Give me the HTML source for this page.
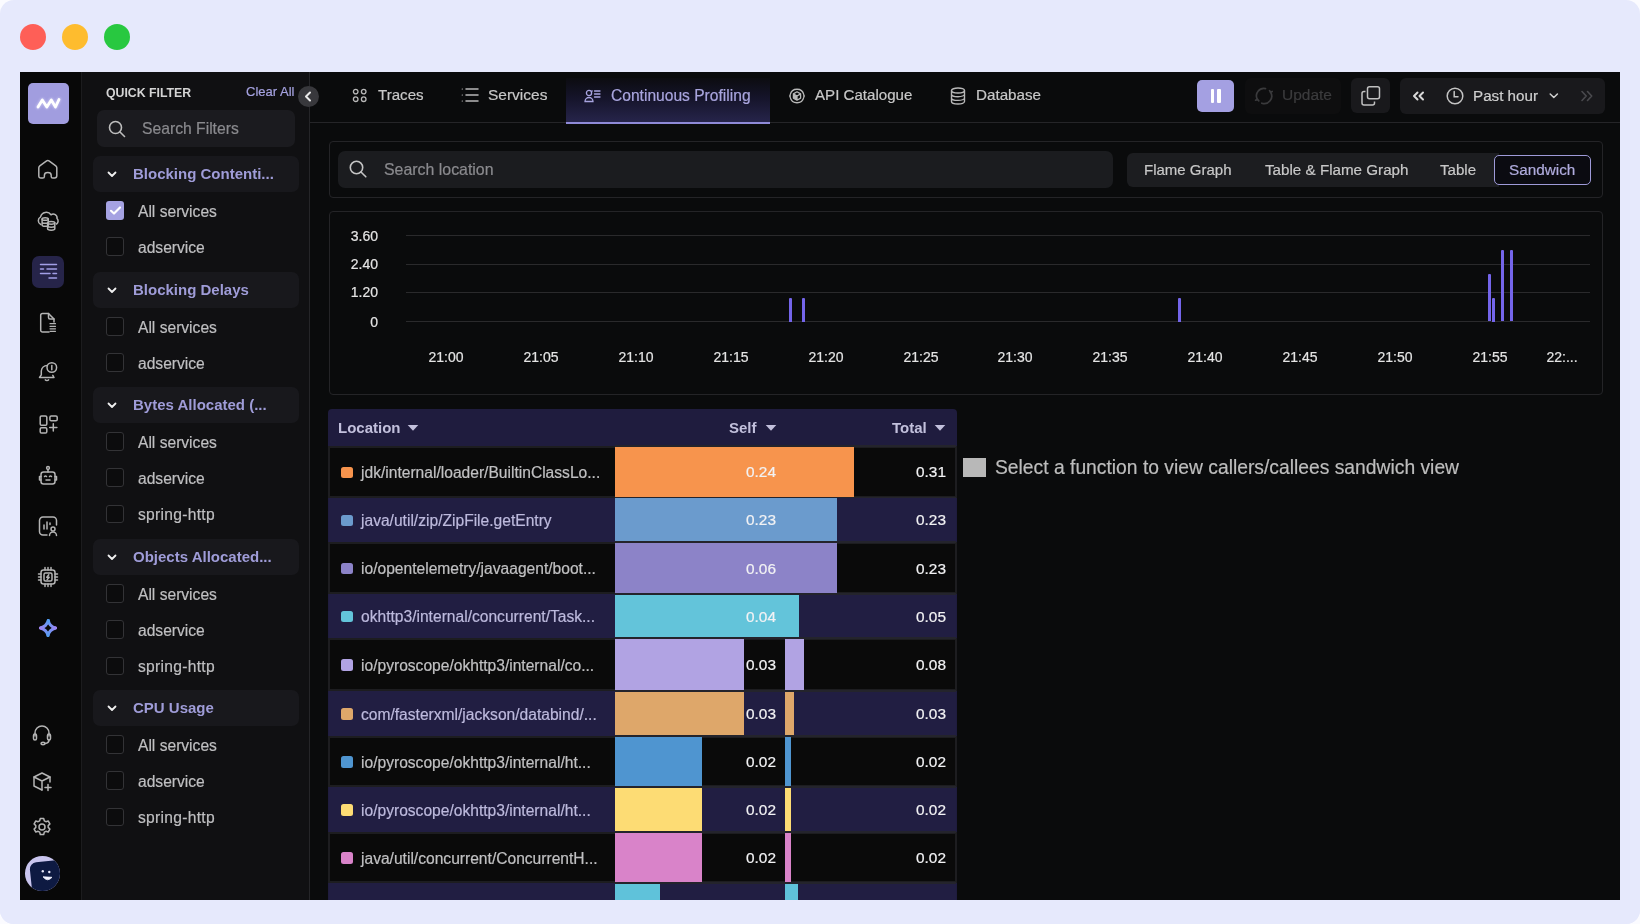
<!DOCTYPE html>
<html><head><meta charset="utf-8">
<style>
*{margin:0;padding:0;box-sizing:border-box}
html,body{width:1640px;height:924px;overflow:hidden}
body{background:#fbfbff;font-family:"Liberation Sans",sans-serif;position:relative}
.a{position:absolute}
.t{position:absolute;white-space:nowrap;line-height:20px;height:20px;will-change:transform;-webkit-text-stroke:0.2px currentColor}
svg{position:absolute;overflow:visible}
.ic{fill:none;stroke:#b4b4b4;stroke-width:1.5;stroke-linecap:round;stroke-linejoin:round}
</style></head><body>
<div class="a" style="left:0;top:0;width:1640px;height:924px;border-radius:14px;background:#e6e9fc"></div>
<!-- traffic lights -->
<div class="a" style="left:20px;top:24px;width:26px;height:26px;border-radius:50%;background:#fe5f57"></div>
<div class="a" style="left:62px;top:24px;width:26px;height:26px;border-radius:50%;background:#febc2e"></div>
<div class="a" style="left:104px;top:24px;width:26px;height:26px;border-radius:50%;background:#28c840"></div>

<!-- app window -->
<div class="a" style="left:20px;top:72px;width:1600px;height:828px;background:#0a0b0c"></div>
<!-- left sidebar -->
<div class="a" style="left:20px;top:72px;width:62px;height:828px;background:#080808;border-right:1px solid #1c1c1e"></div>
<!-- filter panel -->
<div class="a" style="left:82px;top:72px;width:228px;height:828px;background:#101012;border-right:1px solid #252528"></div>

<!-- SIDEBAR ICONS -->
<div class="a" style="left:28px;top:83px;width:41px;height:41px;border-radius:5px;background:#a19ddf"></div>
<svg width="41" height="41" style="left:28px;top:83px"><polyline points="10,24 14.3,17 18.8,24 23.3,17 27.5,24 31,16.5" fill="none" stroke="#e8e6ff" stroke-width="4" stroke-linejoin="round" stroke-linecap="round" opacity="0.5" style="filter:blur(1px)"/><polyline points="10,24 14.3,17 18.8,24 23.3,17 27.5,24 31,16.5" fill="none" stroke="#fff" stroke-width="2.8" stroke-linejoin="round" stroke-linecap="round"/></svg>

<!-- home -->
<svg width="24" height="24" style="left:36px;top:157px" class="ic"><path d="M2.8 10.8 Q2.8 9.6 3.8 8.8 L10.6 3.9 Q11.8 3.1 13 3.9 L19.8 8.8 Q20.8 9.6 20.8 10.8 V18.8 Q20.8 21 18.6 21 H16.8 Q15.2 21 15.2 19.4 V18.3 Q15.2 15.6 11.8 15.6 Q8.4 15.6 8.4 18.3 V19.4 Q8.4 21 6.8 21 H5 Q2.8 21 2.8 18.8 Z"/></svg>
<!-- cloud db -->
<svg width="24" height="24" style="left:36px;top:208px" class="ic"><path d="M4.8 16.5 A4.3 4.3 0 0 1 4.6 8.8 A5.8 5.8 0 0 1 15 6.8 A3.8 3.8 0 0 1 21 10.5 A3.5 3.5 0 0 1 20.5 16"/><ellipse cx="9.2" cy="11" rx="3.1" ry="1.3"/><path d="M6.1 11 v6 a3.1 1.3 0 0 0 6.2 0 V11 M6.1 14 a3.1 1.3 0 0 0 6.2 0"/><ellipse cx="15.2" cy="14.8" rx="3.6" ry="1.4"/><path d="M11.6 14.8 v6 a3.6 1.4 0 0 0 7.2 0 V14.8 M11.6 17.8 a3.6 1.4 0 0 0 7.2 0"/></svg>
<!-- active -->
<div class="a" style="left:32px;top:256px;width:32px;height:32px;border-radius:7px;background:#262449"></div>
<svg width="32" height="32" style="left:32px;top:256px" fill="none" stroke="#a29ee6" stroke-width="1.5" stroke-linecap="round"><path d="M8.5 8.5 H24.5 M8.5 13 H11.5 M15 13 H24.5 M8.5 17.5 H18 M21 17.5 H24.5 M17 22 H24.5"/></svg>
<!-- doc -->
<svg width="24" height="24" style="left:36px;top:311.3px" class="ic"><path d="M13 21 H6.5 A1.8 1.8 0 0 1 4.7 19.2 V4.3 A1.8 1.8 0 0 1 6.5 2.5 H12.5 L18 8 V11"/><path d="M12.5 2.5 V6.5 A1.5 1.5 0 0 0 14 8 H18"/><path d="M14 12.7 H19.5 M14 15.3 H19.5 M14 17.8 H19.5 M14 20.3 H19.5" stroke-width="1.2"/></svg>
<!-- bell -->
<svg width="24" height="24" style="left:35px;top:359.5px" class="ic"><path d="M12.2 5.5 A6 6 0 0 0 6.3 11 V14.8 L4.5 17.5 H19 L17.8 15.3"/><path d="M10.3 19.8 a1.9 1.6 0 0 0 3.3 0"/><circle cx="16.8" cy="7.5" r="4.8"/><path d="M16.8 5.5 V9.8"/></svg>
<!-- grid plus -->
<svg width="24" height="24" style="left:36px;top:412px" class="ic"><rect x="4.2" y="4" width="6.6" height="9.3" rx="1.3"/><rect x="4.2" y="15.8" width="6.6" height="5.3" rx="1.3"/><rect x="13.9" y="4" width="7.3" height="4.8" rx="1.3"/><path d="M17.3 11.8 V19 M13.7 15.4 H20.9"/></svg>
<!-- robot -->
<svg width="24" height="24" style="left:36px;top:464px" class="ic"><rect x="5" y="8" width="14" height="12" rx="2.5"/><path d="M12 8 V5.5"/><circle cx="12" cy="4" r="1.4"/><path d="M5 12.5 H3.5 V16 H5 M19 12.5 H20.5 V16 H19"/><path d="M8.5 12.5 q1 -1 2 0 M13.5 12.5 q1 -1 2 0 M10 16 H14"/></svg>
<!-- chart person -->
<svg width="24" height="24" style="left:36px;top:514px" class="ic"><path d="M11 21 H7 A3.5 3.5 0 0 1 3.5 17.5 V6.5 A3.5 3.5 0 0 1 7 3 H17 A3.5 3.5 0 0 1 20.5 6.5 V11"/><path d="M8 11 V15 M11 8 V15 M14 9 V10.5"/><circle cx="17" cy="15" r="2"/><path d="M13.5 21.5 a3.5 3.5 0 0 1 7 0"/></svg>
<!-- chip -->
<svg width="24" height="24" style="left:36px;top:565px" class="ic"><rect x="5" y="5" width="14" height="14" rx="2.5"/><rect x="8" y="8" width="8" height="8" rx="1.5"/><path d="M12.8 9.8 L10.8 12.3 H13.2 L11.2 14.5"/><path d="M9 5 V2.5 M12 5 V2.5 M15 5 V2.5 M9 19 V21.5 M12 19 V21.5 M15 19 V21.5 M5 9 H2.5 M5 12 H2.5 M5 15 H2.5 M19 9 H21.5 M19 12 H21.5 M19 15 H21.5"/></svg>
<!-- sparkle -->
<svg width="18" height="18" style="left:39.3px;top:619.3px" fill="none" stroke-width="3" stroke-linecap="round">
<defs>
<linearGradient id="g1" gradientUnits="userSpaceOnUse" x1="9" y1="0" x2="18" y2="9"><stop offset="0" stop-color="#4f9ef2"/><stop offset="1" stop-color="#a283f2"/></linearGradient>
<linearGradient id="g2" gradientUnits="userSpaceOnUse" x1="18" y1="9" x2="9" y2="18"><stop offset="0" stop-color="#a283f2"/><stop offset="1" stop-color="#4f9ef2"/></linearGradient>
<linearGradient id="g3" gradientUnits="userSpaceOnUse" x1="9" y1="18" x2="0" y2="9"><stop offset="0" stop-color="#4f9ef2"/><stop offset="1" stop-color="#a283f2"/></linearGradient>
<linearGradient id="g4" gradientUnits="userSpaceOnUse" x1="0" y1="9" x2="9" y2="0"><stop offset="0" stop-color="#a283f2"/><stop offset="1" stop-color="#4f9ef2"/></linearGradient>
</defs>
<path d="M9.3 1.5 Q10.5 7.5 16.5 9" stroke="url(#g1)"/>
<path d="M16.5 9 Q10.5 10.5 9 16.5" stroke="url(#g2)"/>
<path d="M9 16.5 Q7.5 10.5 1.5 9" stroke="url(#g3)"/>
<path d="M1.5 9 Q7.5 7.5 9.3 1.5" stroke="url(#g4)"/>
</svg>
<!-- bottom icons -->
<svg width="24" height="24" style="left:29.5px;top:722px" class="ic"><path d="M5 14 V11 A7 7 0 0 1 19 11 V14"/><rect x="3.5" y="12" width="3" height="6" rx="1.5"/><rect x="17.5" y="12" width="3" height="6" rx="1.5"/><path d="M19 18 Q19 21 15 21.5"/><ellipse cx="13" cy="21.5" rx="2" ry="1.2"/></svg>
<svg width="24" height="24" style="left:29.5px;top:769px" class="ic"><path d="M12 21 L4 17 V8 L12 4 L20 8 V13"/><path d="M4 8 L12 12 L20 8 M12 12 V21"/><path d="M18 15.5 V21.5 M15 18.5 H21"/></svg>
<svg width="24" height="24" style="left:29.5px;top:815px" class="ic"><path d="M10.3 3.5 h3.4 l.6 2.3 1.6.9 2.3-.7 1.7 2.9-1.7 1.7v1.8l1.7 1.7-1.7 2.9-2.3-.7-1.6.9-.6 2.3h-3.4l-.6-2.3-1.6-.9-2.3.7-1.7-2.9 1.7-1.7v-1.8l-1.7-1.7 1.7-2.9 2.3.7 1.6-.9z"/><circle cx="12" cy="12" r="3"/></svg>
<!-- avatar -->
<div class="a" style="left:25px;top:856px;width:34.5px;height:34.5px;border-radius:50%;background:#c9c5ee;overflow:hidden"><div class="a" style="left:6px;top:5px;width:36px;height:36px;border-radius:7px;background:#0e1a42;transform:rotate(-6deg)"></div></div>
<svg width="34" height="34" style="left:25px;top:856px"><ellipse cx="17.8" cy="15.3" rx="1.2" ry="1.3" fill="#e8e8f8"/><ellipse cx="24.3" cy="16" rx="1.2" ry="1.3" fill="#e8e8f8"/><path d="M18 20.8 Q22.5 26.5 27 21.3 Z" fill="#f4f4ff" stroke="#f4f4ff" stroke-width="0.8" stroke-linejoin="round"/></svg>


<!-- FILTER PANEL -->
<div class="t" style="left:106px;top:83px;font-size:12.3px;font-weight:bold;-webkit-text-stroke:0;color:#d4d4d4">QUICK FILTER</div>
<div class="t" style="left:246px;top:82.3px;font-size:13px;color:#a5a2e0">Clear All</div>
<div class="a" style="left:298px;top:86px;width:21px;height:21px;border-radius:50%;background:#38383c"></div>
<svg width="21" height="21" style="left:298px;top:86px" fill="none" stroke="#e8e8e8" stroke-width="2" stroke-linecap="round" stroke-linejoin="round"><path d="M12 6.5 L8 10.5 L12 14.5"/></svg>
<div class="a" style="left:97px;top:110px;width:198px;height:37px;border-radius:7px;background:#1b1b1f"></div>
<svg width="18" height="18" style="left:108px;top:120px" fill="none" stroke="#bdbdbd" stroke-width="1.6" stroke-linecap="round"><circle cx="7.5" cy="7.5" r="6"/><path d="M12 12 L16.5 16.5"/></svg>
<div class="t" style="left:142px;top:119px;font-size:15.7px;color:#8a8a8e">Search Filters</div>

<div class="a" style="left:93px;top:156px;width:206px;height:36px;border-radius:7px;background:#18181c"></div>
<svg width="12" height="12" style="left:106px;top:168px" fill="none" stroke="#f0f0f0" stroke-width="1.8" stroke-linecap="round" stroke-linejoin="round"><path d="M2.5 4.5 L6 8 L9.5 4.5"/></svg>
<div class="t" style="left:133px;top:164px;font-size:15px;font-weight:bold;-webkit-text-stroke:0;color:#9f9cd8">Blocking Contenti...</div>
<div class="a" style="left:106px;top:201.0px;width:18.3px;height:18.5px;border-radius:3px;background:#a5a2e2"></div>
<svg width="18.3" height="18.5" style="left:105.8px;top:200.8px" fill="none" stroke="#fff" stroke-width="2.2" stroke-linecap="round" stroke-linejoin="round"><path d="M5 9.8 L8 12.5 L14 6.5"/></svg>
<div class="t" style="left:138px;top:201.5px;font-size:15.6px;color:#bfbfc1">All services</div>
<div class="a" style="left:106px;top:237.4px;width:18.3px;height:18.5px;border-radius:3px;background:#0c0c0d;border:1px solid #333336"></div>
<div class="t" style="left:138px;top:237.9px;font-size:15.6px;color:#bfbfc1">adservice</div>
<div class="a" style="left:93px;top:272px;width:206px;height:36px;border-radius:7px;background:#18181c"></div>
<svg width="12" height="12" style="left:106px;top:284px" fill="none" stroke="#f0f0f0" stroke-width="1.8" stroke-linecap="round" stroke-linejoin="round"><path d="M2.5 4.5 L6 8 L9.5 4.5"/></svg>
<div class="t" style="left:133px;top:280px;font-size:15px;font-weight:bold;-webkit-text-stroke:0;color:#9f9cd8">Blocking Delays</div>
<div class="a" style="left:106px;top:317.0px;width:18.3px;height:18.5px;border-radius:3px;background:#0c0c0d;border:1px solid #333336"></div>
<div class="t" style="left:138px;top:317.5px;font-size:15.6px;color:#bfbfc1">All services</div>
<div class="a" style="left:106px;top:353.4px;width:18.3px;height:18.5px;border-radius:3px;background:#0c0c0d;border:1px solid #333336"></div>
<div class="t" style="left:138px;top:353.9px;font-size:15.6px;color:#bfbfc1">adservice</div>
<div class="a" style="left:93px;top:387px;width:206px;height:36px;border-radius:7px;background:#18181c"></div>
<svg width="12" height="12" style="left:106px;top:399px" fill="none" stroke="#f0f0f0" stroke-width="1.8" stroke-linecap="round" stroke-linejoin="round"><path d="M2.5 4.5 L6 8 L9.5 4.5"/></svg>
<div class="t" style="left:133px;top:395px;font-size:15px;font-weight:bold;-webkit-text-stroke:0;color:#9f9cd8">Bytes Allocated (...</div>
<div class="a" style="left:106px;top:432.0px;width:18.3px;height:18.5px;border-radius:3px;background:#0c0c0d;border:1px solid #333336"></div>
<div class="t" style="left:138px;top:432.5px;font-size:15.6px;color:#bfbfc1">All services</div>
<div class="a" style="left:106px;top:468.4px;width:18.3px;height:18.5px;border-radius:3px;background:#0c0c0d;border:1px solid #333336"></div>
<div class="t" style="left:138px;top:468.9px;font-size:15.6px;color:#bfbfc1">adservice</div>
<div class="a" style="left:106px;top:504.7px;width:18.3px;height:18.5px;border-radius:3px;background:#0c0c0d;border:1px solid #333336"></div>
<div class="t" style="left:138px;top:505.2px;font-size:15.6px;color:#bfbfc1;letter-spacing:0.3px">spring-http</div>
<div class="a" style="left:93px;top:539px;width:206px;height:36px;border-radius:7px;background:#18181c"></div>
<svg width="12" height="12" style="left:106px;top:551px" fill="none" stroke="#f0f0f0" stroke-width="1.8" stroke-linecap="round" stroke-linejoin="round"><path d="M2.5 4.5 L6 8 L9.5 4.5"/></svg>
<div class="t" style="left:133px;top:547px;font-size:15px;font-weight:bold;-webkit-text-stroke:0;color:#9f9cd8">Objects Allocated...</div>
<div class="a" style="left:106px;top:584.0px;width:18.3px;height:18.5px;border-radius:3px;background:#0c0c0d;border:1px solid #333336"></div>
<div class="t" style="left:138px;top:584.5px;font-size:15.6px;color:#bfbfc1">All services</div>
<div class="a" style="left:106px;top:620.4px;width:18.3px;height:18.5px;border-radius:3px;background:#0c0c0d;border:1px solid #333336"></div>
<div class="t" style="left:138px;top:620.9px;font-size:15.6px;color:#bfbfc1">adservice</div>
<div class="a" style="left:106px;top:656.7px;width:18.3px;height:18.5px;border-radius:3px;background:#0c0c0d;border:1px solid #333336"></div>
<div class="t" style="left:138px;top:657.2px;font-size:15.6px;color:#bfbfc1;letter-spacing:0.3px">spring-http</div>
<div class="a" style="left:93px;top:690px;width:206px;height:36px;border-radius:7px;background:#18181c"></div>
<svg width="12" height="12" style="left:106px;top:702px" fill="none" stroke="#f0f0f0" stroke-width="1.8" stroke-linecap="round" stroke-linejoin="round"><path d="M2.5 4.5 L6 8 L9.5 4.5"/></svg>
<div class="t" style="left:133px;top:698px;font-size:15px;font-weight:bold;-webkit-text-stroke:0;color:#9f9cd8">CPU Usage</div>
<div class="a" style="left:106px;top:735.0px;width:18.3px;height:18.5px;border-radius:3px;background:#0c0c0d;border:1px solid #333336"></div>
<div class="t" style="left:138px;top:735.5px;font-size:15.6px;color:#bfbfc1">All services</div>
<div class="a" style="left:106px;top:771.4px;width:18.3px;height:18.5px;border-radius:3px;background:#0c0c0d;border:1px solid #333336"></div>
<div class="t" style="left:138px;top:771.9px;font-size:15.6px;color:#bfbfc1">adservice</div>
<div class="a" style="left:106px;top:807.7px;width:18.3px;height:18.5px;border-radius:3px;background:#0c0c0d;border:1px solid #333336"></div>
<div class="t" style="left:138px;top:808.2px;font-size:15.6px;color:#bfbfc1;letter-spacing:0.3px">spring-http</div>

<!-- NAV -->
<div class="a" style="left:310px;top:122px;width:1310px;height:1px;background:#252528"></div>
<div class="a" style="left:566px;top:78px;width:204px;height:44px;background:linear-gradient(180deg,#0c0c10 0%,#15142a 45%,#26244a 100%)"></div>
<div class="a" style="left:566px;top:122px;width:204px;height:2px;background:#8f8ad8"></div>
<svg width="16" height="16" style="left:352px;top:88px" fill="none" stroke="#b8b8b8" stroke-width="1.3"><circle cx="3.7" cy="3.6" r="2.3"/><circle cx="11.7" cy="3.6" r="2.3"/><circle cx="3.7" cy="11.2" r="2.3"/><circle cx="11.7" cy="11.2" r="2.3"/></svg>
<div class="t" style="left:378px;top:85px;font-size:15.1px;color:#c8c8c8">Traces</div>
<svg width="18" height="16" style="left:461px;top:87px" fill="none" stroke="#b8b8b8" stroke-width="1.5" stroke-linecap="round"><path d="M5 2 H17 M5 8 H17 M5 14 H17"/><path d="M1.2 2 H1.4 M1.2 8 H1.4 M1.2 14 H1.4" stroke-width="1.2"/></svg>
<div class="t" style="left:488px;top:85px;font-size:15.5px;color:#c8c8c8">Services</div>
<svg width="18" height="14" style="left:584px;top:89px" fill="none" stroke="#a8a4e0" stroke-width="1.3" stroke-linecap="round"><circle cx="5" cy="4" r="2.6"/><path d="M1 12.5 a4 4 0 0 1 8 0 Z"/><path d="M10.5 2 H16 M10.5 5 H16 M10.5 8 H16 M8 2 H8.2"/></svg>
<div class="t" style="left:611px;top:85.5px;font-size:15.6px;color:#a9a5de">Continuous Profiling</div>
<svg width="18" height="18" style="left:788px;top:87px" fill="none" stroke="#b8b8b8" stroke-width="1.3" stroke-linecap="round" stroke-linejoin="round"><path d="M2.2 7.6 A7 7 0 0 1 15.8 7.6 M15.8 10.4 A7 7 0 0 1 2.2 10.4"/><path d="M9 4.8 L12.6 6.9 V11.1 L9 13.2 L5.4 11.1 V6.9 Z M5.4 6.9 L9 9 L12.6 6.9 M9 9 V13.2"/><path d="M5.4 6.9 L9 9 V13.2 L5.4 11.1 Z" fill="#b8b8b8" stroke="none"/><circle cx="2" cy="9" r="1" fill="#b8b8b8" stroke="none"/><circle cx="16" cy="9" r="1" fill="#b8b8b8" stroke="none"/></svg>
<div class="t" style="left:815px;top:85px;font-size:15.1px;color:#c8c8c8">API Catalogue</div>
<svg width="16" height="18" style="left:950px;top:87px" fill="none" stroke="#b8b8b8" stroke-width="1.4"><ellipse cx="8" cy="3.5" rx="6.5" ry="2.5"/><path d="M1.5 3.5 V14.5 A6.5 2.5 0 0 0 14.5 14.5 V3.5 M1.5 7.2 A6.5 2.5 0 0 0 14.5 7.2 M1.5 10.9 A6.5 2.5 0 0 0 14.5 10.9"/></svg>
<div class="t" style="left:976px;top:85px;font-size:15.2px;color:#c8c8c8">Database</div>

<div class="a" style="left:1197px;top:80px;width:37px;height:32px;border-radius:5px;background:#a4a0e2"></div>
<div class="a" style="left:1210.5px;top:89px;width:3.5px;height:13.5px;border-radius:1px;background:#fff"></div>
<div class="a" style="left:1217px;top:89px;width:3.5px;height:13.5px;border-radius:1px;background:#fff"></div>
<div class="a" style="left:1245px;top:78px;width:96px;height:36px;border-radius:6px;background:#0e0e0f"></div>
<svg width="18" height="18" style="left:1254.5px;top:87px" fill="none" stroke="#3a3a3c" stroke-width="1.7" stroke-linecap="round" stroke-linejoin="round"><path d="M10.5 1.6 A7.5 7.5 0 0 0 2.2 12.2"/><path d="M0.6 13.2 L2.3 12.2 L3.8 13.8"/><path d="M15.6 5.2 A7.5 7.5 0 0 1 6.8 16.2"/><path d="M17.2 4.5 L15.6 5.2 L14.6 3.6"/></svg>
<div class="t" style="left:1282px;top:85px;font-size:15.5px;color:#3c3c3e">Update</div>
<div class="a" style="left:1351px;top:78px;width:39px;height:35px;border-radius:6px;background:#19191c"></div>
<svg width="20" height="20" style="left:1361px;top:86px" fill="none" stroke="#c0c0c0" stroke-width="1.5" stroke-linejoin="round"><rect x="6.5" y="0.8" width="12" height="12" rx="2"/><path d="M4.5 5.5 H3 A2 2 0 0 0 1 7.5 V17 A2 2 0 0 0 3 19 H11.5 A2 2 0 0 0 13.5 17 V15.5"/></svg>
<div class="a" style="left:1400px;top:78px;width:205px;height:36px;border-radius:6px;background:#19191c"></div>
<svg width="14" height="12" style="left:1411.5px;top:90px" fill="none" stroke="#d8d8d8" stroke-width="2" stroke-linecap="round" stroke-linejoin="round"><path d="M5.5 2.5 L2 6 L5.5 9.5 M11 2.5 L7.5 6 L11 9.5"/></svg>
<svg width="18" height="18" style="left:1445.5px;top:86.5px" fill="none" stroke="#c4c4c4" stroke-width="1.5" stroke-linecap="round"><circle cx="9" cy="9" r="7.8"/><path d="M8.2 4.5 V9.8 H12"/></svg>
<div class="t" style="left:1473px;top:85.7px;font-size:15.2px;color:#cfcfcf">Past hour</div>
<svg width="10" height="8" style="left:1549px;top:92px" fill="none" stroke="#d0d0d0" stroke-width="1.5" stroke-linecap="round" stroke-linejoin="round"><path d="M1.2 2 L4.8 5.5 L8.4 2"/></svg>
<svg width="14" height="12" style="left:1580px;top:90px" fill="none" stroke="#4a4a4e" stroke-width="1.6" stroke-linecap="round" stroke-linejoin="round"><path d="M2 1.5 L6.2 6 L2 10.5 M7.5 1.5 L11.7 6 L7.5 10.5"/></svg>

<!-- MAIN CARD 1 -->
<div class="a" style="left:329px;top:141px;width:1274px;height:57px;border-radius:4px;border:1px solid #242427;background:#0a0b0c"></div>
<div class="a" style="left:338px;top:151px;width:775px;height:37px;border-radius:7px;background:#1b1c1f"></div>
<svg width="18" height="18" style="left:349px;top:160px" fill="none" stroke="#c4c4c4" stroke-width="1.6" stroke-linecap="round"><circle cx="7.5" cy="7.5" r="6.2"/><path d="M12 12 L16.8 16.8"/></svg>
<div class="t" style="left:384px;top:160px;font-size:15.9px;color:#8a8a8e">Search location</div>
<div class="a" style="left:1127px;top:153px;width:372px;height:34px;border-radius:6px 0 0 6px;background:#1c1d20"></div>
<div class="t" style="left:1144px;top:160px;font-size:15px;color:#c8c8c8">Flame Graph</div>
<div class="t" style="left:1265.3px;top:160px;font-size:15.2px;color:#c8c8c8">Table &amp; Flame Graph</div>
<div class="t" style="left:1440px;top:160px;font-size:15.1px;color:#c8c8c8">Table</div>
<div class="a" style="left:1494px;top:155px;width:97px;height:30px;border-radius:5px;border:1.7px solid #9e9ad8;background:#0b0b11"></div>
<div class="t" style="left:1509px;top:160px;font-size:15.3px;color:#b0acde">Sandwich</div>

<!-- CHART CARD -->
<div class="a" style="left:329px;top:211px;width:1274px;height:184px;border-radius:4px;border:1px solid #242427;background:#0a0b0c"></div>
<div class="a" style="left:406px;top:235.0px;width:1184px;height:1.3px;background:#2a2a2c"></div>
<div class="t" style="left:300px;width:78px;text-align:right;top:225.5px;font-size:14px;color:#e4e4e4">3.60</div>
<div class="a" style="left:406px;top:263.5px;width:1184px;height:1.3px;background:#2a2a2c"></div>
<div class="t" style="left:300px;width:78px;text-align:right;top:254px;font-size:14px;color:#e4e4e4">2.40</div>
<div class="a" style="left:406px;top:291.5px;width:1184px;height:1.3px;background:#2a2a2c"></div>
<div class="t" style="left:300px;width:78px;text-align:right;top:282px;font-size:14px;color:#e4e4e4">1.20</div>
<div class="a" style="left:406px;top:321.0px;width:1184px;height:1.3px;background:#2a2a2c"></div>
<div class="t" style="left:300px;width:78px;text-align:right;top:311.5px;font-size:14px;color:#e4e4e4">0</div>
<div class="t" style="left:406.0px;width:80px;text-align:center;top:346.5px;font-size:14px;color:#e4e4e4">21:00</div>
<div class="t" style="left:500.9px;width:80px;text-align:center;top:346.5px;font-size:14px;color:#e4e4e4">21:05</div>
<div class="t" style="left:595.8px;width:80px;text-align:center;top:346.5px;font-size:14px;color:#e4e4e4">21:10</div>
<div class="t" style="left:690.7px;width:80px;text-align:center;top:346.5px;font-size:14px;color:#e4e4e4">21:15</div>
<div class="t" style="left:785.6px;width:80px;text-align:center;top:346.5px;font-size:14px;color:#e4e4e4">21:20</div>
<div class="t" style="left:880.5px;width:80px;text-align:center;top:346.5px;font-size:14px;color:#e4e4e4">21:25</div>
<div class="t" style="left:975.3px;width:80px;text-align:center;top:346.5px;font-size:14px;color:#e4e4e4">21:30</div>
<div class="t" style="left:1070.2px;width:80px;text-align:center;top:346.5px;font-size:14px;color:#e4e4e4">21:35</div>
<div class="t" style="left:1165.1px;width:80px;text-align:center;top:346.5px;font-size:14px;color:#e4e4e4">21:40</div>
<div class="t" style="left:1260.0px;width:80px;text-align:center;top:346.5px;font-size:14px;color:#e4e4e4">21:45</div>
<div class="t" style="left:1354.9px;width:80px;text-align:center;top:346.5px;font-size:14px;color:#e4e4e4">21:50</div>
<div class="t" style="left:1449.8px;width:80px;text-align:center;top:346.5px;font-size:14px;color:#e4e4e4">21:55</div>
<div class="t" style="left:1522px;width:80px;text-align:center;top:346.5px;font-size:14px;color:#e4e4e4">22:...</div>
<div class="a" style="left:789.0px;top:297.5px;width:3px;height:24.0px;background:#7465ea;border-radius:1px 1px 0 0"></div>
<div class="a" style="left:801.5px;top:297.5px;width:3px;height:24.0px;background:#7465ea;border-radius:1px 1px 0 0"></div>
<div class="a" style="left:1177.5px;top:297.5px;width:3px;height:24.0px;background:#7465ea;border-radius:1px 1px 0 0"></div>
<div class="a" style="left:1487.5px;top:273.7px;width:3px;height:47.8px;background:#7465ea;border-radius:1px 1px 0 0"></div>
<div class="a" style="left:1491.7px;top:297.5px;width:3px;height:24.0px;background:#7465ea;border-radius:1px 1px 0 0"></div>
<div class="a" style="left:1500.8px;top:250.3px;width:3px;height:71.2px;background:#7465ea;border-radius:1px 1px 0 0"></div>
<div class="a" style="left:1509.6px;top:250.3px;width:3px;height:71.2px;background:#7465ea;border-radius:1px 1px 0 0"></div>


<!-- TABLE -->
<div class="a" style="left:328px;top:408.5px;width:629px;height:492px;border-radius:4px 4px 0 0;background:#1f1c3e"></div>
<div class="t" style="left:338px;top:418px;font-size:15px;font-weight:bold;-webkit-text-stroke:0;color:#c2c0dc">Location</div>
<svg width="12" height="8" style="left:407px;top:424px"><path d="M0.7 1 H11.3 L6 6.8 Z" fill="#c2c0dc"/></svg>
<div class="t" style="left:729px;top:418px;font-size:15px;font-weight:bold;-webkit-text-stroke:0;color:#c2c0dc">Self</div>
<svg width="12" height="8" style="left:765px;top:424px"><path d="M0.7 1 H11.3 L6 6.8 Z" fill="#c2c0dc"/></svg>
<div class="t" style="left:892px;top:418px;font-size:15px;font-weight:bold;-webkit-text-stroke:0;color:#c2c0dc">Total</div>
<svg width="12" height="8" style="left:934px;top:424px"><path d="M0.7 1 H11.3 L6 6.8 Z" fill="#c2c0dc"/></svg>
<div class="a" style="left:328px;top:446px;width:629px;height:51.5px;background:#0a0a0a;border:2px solid #1d1d20"></div>
<div class="a" style="left:615px;top:446px;width:238.8px;height:51.5px;background:#f7944d"></div>
<div class="a" style="left:341px;top:466.7px;width:11.5px;height:11.5px;border-radius:2.5px;background:#f7944d"></div>
<div class="t" style="left:361px;top:463.1px;font-size:15.6px;color:#c0c0c2">jdk/internal/loader/BuiltinClassLo...</div>
<div class="t" style="left:676px;width:100px;text-align:right;top:462.3px;font-size:15.4px;color:#f2f2f4">0.24</div>
<div class="t" style="left:846px;width:100px;text-align:right;top:462.3px;font-size:15.4px;color:#f2f2f4">0.31</div>
<div class="a" style="left:329px;top:497.5px;width:627px;height:44.5px;background:#211e42"></div>
<div class="a" style="left:615px;top:497.5px;width:222.0px;height:44.5px;background:#6b9bcd"></div>
<div class="a" style="left:341px;top:514.7px;width:11.5px;height:11.5px;border-radius:2.5px;background:#6b9bcd"></div>
<div class="t" style="left:361px;top:511.1px;font-size:15.6px;color:#bdbadd">java/util/zip/ZipFile.getEntry</div>
<div class="t" style="left:676px;width:100px;text-align:right;top:510.3px;font-size:15.4px;color:#f2f2f4">0.23</div>
<div class="t" style="left:846px;width:100px;text-align:right;top:510.3px;font-size:15.4px;color:#f2f2f4">0.23</div>
<div class="a" style="left:328px;top:542px;width:629px;height:52px;background:#0a0a0a;border:2px solid #1d1d20"></div>
<div class="a" style="left:615px;top:542px;width:222.0px;height:52px;background:#8c83c8"></div>
<div class="a" style="left:341px;top:562.9px;width:11.5px;height:11.5px;border-radius:2.5px;background:#8c83c8"></div>
<div class="t" style="left:361px;top:559.3px;font-size:15.6px;color:#c0c0c2">io/opentelemetry/javaagent/boot...</div>
<div class="t" style="left:676px;width:100px;text-align:right;top:558.5px;font-size:15.4px;color:#f2f2f4">0.06</div>
<div class="t" style="left:846px;width:100px;text-align:right;top:558.5px;font-size:15.4px;color:#f2f2f4">0.23</div>
<div class="a" style="left:329px;top:594px;width:627px;height:44px;background:#211e42"></div>
<div class="a" style="left:615px;top:594px;width:183.5px;height:44px;background:#63c4da"></div>
<div class="a" style="left:341px;top:610.9px;width:11.5px;height:11.5px;border-radius:2.5px;background:#63c4da"></div>
<div class="t" style="left:361px;top:607.3px;font-size:15.6px;color:#bdbadd">okhttp3/internal/concurrent/Task...</div>
<div class="t" style="left:676px;width:100px;text-align:right;top:606.5px;font-size:15.4px;color:#f2f2f4">0.04</div>
<div class="t" style="left:846px;width:100px;text-align:right;top:606.5px;font-size:15.4px;color:#f2f2f4">0.05</div>
<div class="a" style="left:328px;top:638px;width:629px;height:53px;background:#0a0a0a;border:2px solid #1d1d20"></div>
<div class="a" style="left:615px;top:638px;width:128.7px;height:53px;background:#b1a3e3"></div>
<div class="a" style="left:785.3px;top:638px;width:19.1px;height:53px;background:#b1a3e3"></div>
<div class="a" style="left:341px;top:659.4px;width:11.5px;height:11.5px;border-radius:2.5px;background:#b1a3e3"></div>
<div class="t" style="left:361px;top:655.8px;font-size:15.6px;color:#c0c0c2">io/pyroscope/okhttp3/internal/co...</div>
<div class="t" style="left:676px;width:100px;text-align:right;top:655.0px;font-size:15.4px;color:#f2f2f4">0.03</div>
<div class="t" style="left:846px;width:100px;text-align:right;top:655.0px;font-size:15.4px;color:#f2f2f4">0.08</div>
<div class="a" style="left:329px;top:691px;width:627px;height:45px;background:#211e42"></div>
<div class="a" style="left:615px;top:691px;width:128.7px;height:45px;background:#dea76a"></div>
<div class="a" style="left:785.3px;top:691px;width:8.7px;height:45px;background:#dea76a"></div>
<div class="a" style="left:341px;top:708.4px;width:11.5px;height:11.5px;border-radius:2.5px;background:#dea76a"></div>
<div class="t" style="left:361px;top:704.8px;font-size:15.6px;color:#bdbadd">com/fasterxml/jackson/databind/...</div>
<div class="t" style="left:676px;width:100px;text-align:right;top:704.0px;font-size:15.4px;color:#f2f2f4">0.03</div>
<div class="t" style="left:846px;width:100px;text-align:right;top:704.0px;font-size:15.4px;color:#f2f2f4">0.03</div>
<div class="a" style="left:328px;top:736px;width:629px;height:51px;background:#0a0a0a;border:2px solid #1d1d20"></div>
<div class="a" style="left:615px;top:736px;width:86.5px;height:51px;background:#4f95d0"></div>
<div class="a" style="left:785.3px;top:736px;width:6.2px;height:51px;background:#4f95d0"></div>
<div class="a" style="left:341px;top:756.4px;width:11.5px;height:11.5px;border-radius:2.5px;background:#4f95d0"></div>
<div class="t" style="left:361px;top:752.8px;font-size:15.6px;color:#c0c0c2">io/pyroscope/okhttp3/internal/ht...</div>
<div class="t" style="left:676px;width:100px;text-align:right;top:752.0px;font-size:15.4px;color:#f2f2f4">0.02</div>
<div class="t" style="left:846px;width:100px;text-align:right;top:752.0px;font-size:15.4px;color:#f2f2f4">0.02</div>
<div class="a" style="left:329px;top:787px;width:627px;height:45px;background:#211e42"></div>
<div class="a" style="left:615px;top:787px;width:86.5px;height:45px;background:#fddc74"></div>
<div class="a" style="left:785.3px;top:787px;width:6.2px;height:45px;background:#fddc74"></div>
<div class="a" style="left:341px;top:804.4px;width:11.5px;height:11.5px;border-radius:2.5px;background:#fddc74"></div>
<div class="t" style="left:361px;top:800.8px;font-size:15.6px;color:#bdbadd">io/pyroscope/okhttp3/internal/ht...</div>
<div class="t" style="left:676px;width:100px;text-align:right;top:800.0px;font-size:15.4px;color:#f2f2f4">0.02</div>
<div class="t" style="left:846px;width:100px;text-align:right;top:800.0px;font-size:15.4px;color:#f2f2f4">0.02</div>
<div class="a" style="left:328px;top:832px;width:629px;height:51px;background:#0a0a0a;border:2px solid #1d1d20"></div>
<div class="a" style="left:615px;top:832px;width:86.5px;height:51px;background:#d983c9"></div>
<div class="a" style="left:785.3px;top:832px;width:6.2px;height:51px;background:#d983c9"></div>
<div class="a" style="left:341px;top:852.4px;width:11.5px;height:11.5px;border-radius:2.5px;background:#d983c9"></div>
<div class="t" style="left:361px;top:848.8px;font-size:15.6px;color:#c0c0c2">java/util/concurrent/ConcurrentH...</div>
<div class="t" style="left:676px;width:100px;text-align:right;top:848.0px;font-size:15.4px;color:#f2f2f4">0.02</div>
<div class="t" style="left:846px;width:100px;text-align:right;top:848.0px;font-size:15.4px;color:#f2f2f4">0.02</div>
<div class="a" style="left:329px;top:883px;width:627px;height:41px;background:#211e42"></div>
<div class="a" style="left:615px;top:883px;width:45.0px;height:41px;background:#5fc2da"></div>
<div class="a" style="left:785.3px;top:883px;width:13.2px;height:41px;background:#5fc2da"></div>

<div class="a" style="left:615px;top:445.4px;width:341px;height:1.2px;background:#24242c"></div>
<div class="a" style="left:615px;top:496.9px;width:341px;height:1.2px;background:#24242c"></div>
<div class="a" style="left:615px;top:541.4px;width:341px;height:1.2px;background:#24242c"></div>
<div class="a" style="left:615px;top:593.4px;width:341px;height:1.2px;background:#24242c"></div>
<div class="a" style="left:615px;top:637.4px;width:341px;height:1.2px;background:#24242c"></div>
<div class="a" style="left:615px;top:690.4px;width:341px;height:1.2px;background:#24242c"></div>
<div class="a" style="left:615px;top:735.4px;width:341px;height:1.2px;background:#24242c"></div>
<div class="a" style="left:615px;top:786.4px;width:341px;height:1.2px;background:#24242c"></div>
<div class="a" style="left:615px;top:831.4px;width:341px;height:1.2px;background:#24242c"></div>
<div class="a" style="left:615px;top:882.4px;width:341px;height:1.2px;background:#24242c"></div>
<div class="a" style="left:963px;top:458.3px;width:23px;height:18.5px;background:#b8b8b8"></div>
<div class="t" style="left:995px;top:457.6px;font-size:19.3px;color:#bdbdbd">Select a function to view callers/callees sandwich view</div>
<!-- bottom lavender cover -->
<div class="a" style="left:0;top:900px;width:1640px;height:24px;border-radius:0 0 14px 14px;background:#e6e9fc"></div>

</body></html>
